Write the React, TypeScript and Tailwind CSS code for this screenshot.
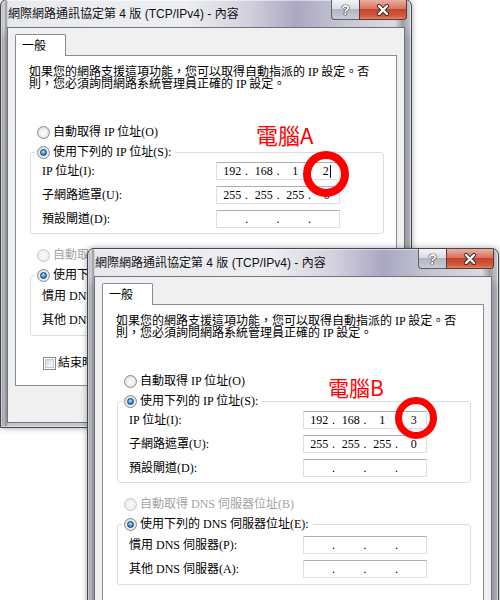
import React from "react";

const BODY = "[font-family:'Liberation_Serif','Noto_Sans_CJK_TC',serif]";

function Radio({ checked, disabled }: { checked?: boolean; disabled?: boolean }) {
  return (
    <span
      className={
        disabled
          ? "relative flex h-[13px] w-[13px] shrink-0 items-center justify-center rounded-full border border-[#c9c9c9] bg-[radial-gradient(circle_at_50%_50%,#fbfbfb_0%,#f2f2f2_45%,#e3e3e3_100%)]"
          : "relative flex h-[13px] w-[13px] shrink-0 items-center justify-center rounded-full border border-[#8a8b8c] bg-[radial-gradient(circle_at_50%_55%,#ffffff_0%,#f3f3f3_35%,#d0d0d0_100%)]"
      }
    >
      {checked && (
        <span className="h-[7px] w-[7px] rounded-full border border-[#123f70] bg-[radial-gradient(circle_at_45%_35%,#b6ecff_0%,#4fa6e0_40%,#1a5796_100%)]" />
      )}
    </span>
  );
}

function Checkbox() {
  return (
    <span className="flex h-[13px] w-[13px] shrink-0 items-center justify-center border border-[#8a8b8c] bg-white">
      <span className="h-[9px] w-[9px] border border-[#c5cad1] bg-[linear-gradient(135deg,#d2d6dc_0%,#eceef0_60%,#f8f8f8_100%)]" />
    </span>
  );
}

function IpBox({ parts, cursor }: { parts: string[]; cursor?: boolean }) {
  return (
    <div className="flex h-[18px] w-[124px] shrink-0 items-center border border-[#dde1e7] border-t-[#abadb3] bg-white text-[12px] leading-none text-black">
      {[0, 1, 2, 3].map((i) => (
        <React.Fragment key={i}>
          <div className="flex flex-1 items-center justify-center pl-[3px]">
            <span>{parts[i]}</span>
            {cursor && i === 3 && <span className="ml-px inline-block h-[13px] w-px bg-black" />}
          </div>
          {i < 3 && <span className="w-[4px] text-center">.</span>}
        </React.Fragment>
      ))}
    </div>
  );
}

function Row({ label, parts, cursor }: { label: string; parts: string[]; cursor?: boolean }) {
  return (
    <div className="flex h-[18px] items-center">
      <span className="w-[174px] text-[12px] leading-[18px]">{label}</span>
      <IpBox parts={parts} cursor={cursor} />
    </div>
  );
}

function WinButton({ children, w }: { children: React.ReactNode; w: string }) {
  return (
    <div
      className={`${w} flex h-[23px] items-center justify-center rounded-[3px] border border-[#707070] bg-[linear-gradient(180deg,#f2f2f2_0%,#ebebeb_50%,#dddddd_51%,#cfcfcf_100%)] text-[12px]`}
    >
      {children}
    </div>
  );
}

type DialogProps = {
  pos: string;
  ip: string[];
  mask: string[];
  cursor?: boolean;
  label: string;
  labelCls: string;
  circleCls: string;
};

function Dialog({ pos, ip, mask, cursor, label, labelCls, circleCls }: DialogProps) {
  const empty = ["", "", "", ""];
  return (
    <div
      className={`${pos} w-[412px] h-[429px] rounded-t-[7px] border border-[#42464e] bg-[linear-gradient(180deg,rgba(255,255,255,0)_0px,rgba(255,255,255,0)_26px,rgba(110,112,120,0.28)_40px,rgba(120,122,130,0.32)_100%),linear-gradient(90deg,#9fa2a8_0px,#d9dbdf_3px,#8e9197_5px,#e6e8eb_7px,#e9ebee_30px,#eceef1_45%,#d3d1de_60%,#aaa7c2_72%,#c6c7d2_84%,#d9dbe0_96%,#9a9da4_98%,#c9cbd0_100%)] shadow-[inset_0_0_0_1px_rgba(255,255,255,0.5),0_0_6px_rgba(0,0,0,0.35)]`}
    >
      {/* title bar */}
      <div className="flex h-[27px]">
        <div className="flex flex-1 items-center pl-[7px] pt-[1px] text-[12px] text-[#111] [font-family:'Liberation_Sans','Noto_Sans_CJK_TC',sans-serif]">
          網際網路通訊協定第 4 版 (TCP/IPv4) - 內容
        </div>
        <div className="mr-[4px] flex h-[20px] items-start">
          <div className="flex h-[20px] w-[28px] items-center justify-center rounded-bl-[4px] border border-t-0 border-r-0 border-[#5b5f6a] bg-[linear-gradient(180deg,#f3f4f7_0%,#dadde4_45%,#b2b6c2_50%,#c9ccd6_100%)]">
            <span className="text-[14px] font-bold leading-none text-white [font-family:'Liberation_Sans',sans-serif] [text-shadow:0_0_1px_#222,0_0_1px_#222,0_0_1px_#222]">
              ?
            </span>
          </div>
          <div className="flex h-[20px] w-[48px] items-center justify-center rounded-br-[4px] border border-t-0 border-[#5b3a35] bg-[linear-gradient(180deg,#eab0a4_0%,#d9735f_45%,#c5432c_50%,#d25a3d_85%,#e6866a_100%)]">
            <svg width="14" height="12" viewBox="0 0 14 12">
              <path d="M3 2 L11 10 M11 2 L3 10" stroke="#3a2a28" strokeWidth="4.2" strokeLinecap="round" />
              <path d="M3 2 L11 10 M11 2 L3 10" stroke="#ffffff" strokeWidth="2.4" strokeLinecap="round" />
            </svg>
          </div>
        </div>
      </div>

      {/* client area */}
      <div className={`mx-[6px] h-[396px] border border-[#6f747c] bg-[#f0f0f0] px-[7px] pt-[6px] text-black ${BODY}`}>
        <div className="relative z-10 -mb-px flex h-[22px] w-[51px] items-center rounded-t-[2px] border border-b-0 border-[#898c95] bg-white pl-[6px] text-[12px]">
          一般
        </div>
        <div className="relative h-[331px] border border-[#898c95] bg-white">
          <div className="pl-[13px] pt-[10px] text-[12px] leading-[12px]">
            <div>如果您的網路支援這項功能，您可以取得自動指派的 IP 設定。否</div>
            <div>則，您必須詢問網路系統管理員正確的 IP 設定。</div>
          </div>

          <div className="mt-[32px] flex h-[20px] items-center gap-[3px] pl-[21px] text-[12px]">
            <Radio />
            <span>自動取得 IP 位址(O)</span>
          </div>
          <div className="ml-[14px] mr-[12px]">
            <div className="relative z-10 ml-[5px] flex h-[20px] w-fit items-center gap-[3px] bg-white pl-[2px] pr-[4px] text-[12px]">
              <Radio checked />
              <span>使用下列的 IP 位址(S):</span>
            </div>
            <div className="-mt-[10px] flex flex-col gap-[6px] rounded-[3px] border border-[#d5dfe5] pb-[5px] pl-[11px] pt-[9px]">
              <Row label="IP 位址(I):" parts={ip} cursor={cursor} />
              <Row label="子網路遮罩(U):" parts={mask} />
              <Row label="預設閘道(D):" parts={empty} />
            </div>
          </div>

          <div className="mt-[11px] flex h-[20px] items-center gap-[3px] pl-[21px] text-[12px] text-[#a3a3a3]">
            <Radio disabled />
            <span>自動取得 DNS 伺服器位址(B)</span>
          </div>
          <div className="ml-[14px] mr-[12px]">
            <div className="relative z-10 ml-[5px] flex h-[20px] w-fit items-center gap-[3px] bg-white pl-[2px] pr-[4px] text-[12px]">
              <Radio checked />
              <span>使用下列的 DNS 伺服器位址(E):</span>
            </div>
            <div className="-mt-[10px] flex flex-col gap-[6px] rounded-[3px] border border-[#d5dfe5] pb-[6px] pl-[11px] pt-[11px]">
              <Row label="慣用 DNS 伺服器(P):" parts={empty} />
              <Row label="其他 DNS 伺服器(A):" parts={empty} />
            </div>
          </div>

          <div className="mt-[17px] flex h-[20px] items-center pl-[27px] pr-[12px] text-[12px]">
            <Checkbox />
            <span className="ml-[2px]">結束時確認設定(L)</span>
            <div className="ml-auto">
              <WinButton w="w-[85px]">進階(V)...</WinButton>
            </div>
          </div>
        </div>
        <div className="flex justify-end gap-[6px] pt-[8px]">
          <WinButton w="w-[75px]">確定</WinButton>
          <WinButton w="w-[75px]">取消</WinButton>
        </div>
      </div>

      {/* annotations */}
      <div className={`${labelCls} absolute leading-none text-[#ff0000] [font-family:'Noto_Sans_CJK_TC','Liberation_Sans',sans-serif]`}>
        {label}
      </div>
      <div className={`${circleCls} absolute rounded-full border-[#ff0000]`} />
    </div>
  );
}

export default function App() {
  return (
    <div className="relative h-[600px] w-[500px] overflow-hidden bg-white">
      <Dialog
        pos="absolute left-0 top-[-1px] z-0"
        ip={["192", "168", "1", "2"]}
        mask={["255", "255", "255", "0"]}
        cursor
        label="電腦A"
        labelCls="left-[255px] top-[123px] text-[22px]"
        circleCls="left-[302px] top-[151px] h-[46px] w-[46px] border-[8px]"
      />
      <Dialog
        pos="absolute left-[87px] top-[248px] z-10"
        ip={["192", "168", "1", "3"]}
        mask={["255", "255", "255", "0"]}
        label="電腦B"
        labelCls="left-[240px] top-[128px] text-[21px]"
        circleCls="left-[307px] top-[148px] h-[42px] w-[42px] border-[7px]"
      />
    </div>
  );
}
